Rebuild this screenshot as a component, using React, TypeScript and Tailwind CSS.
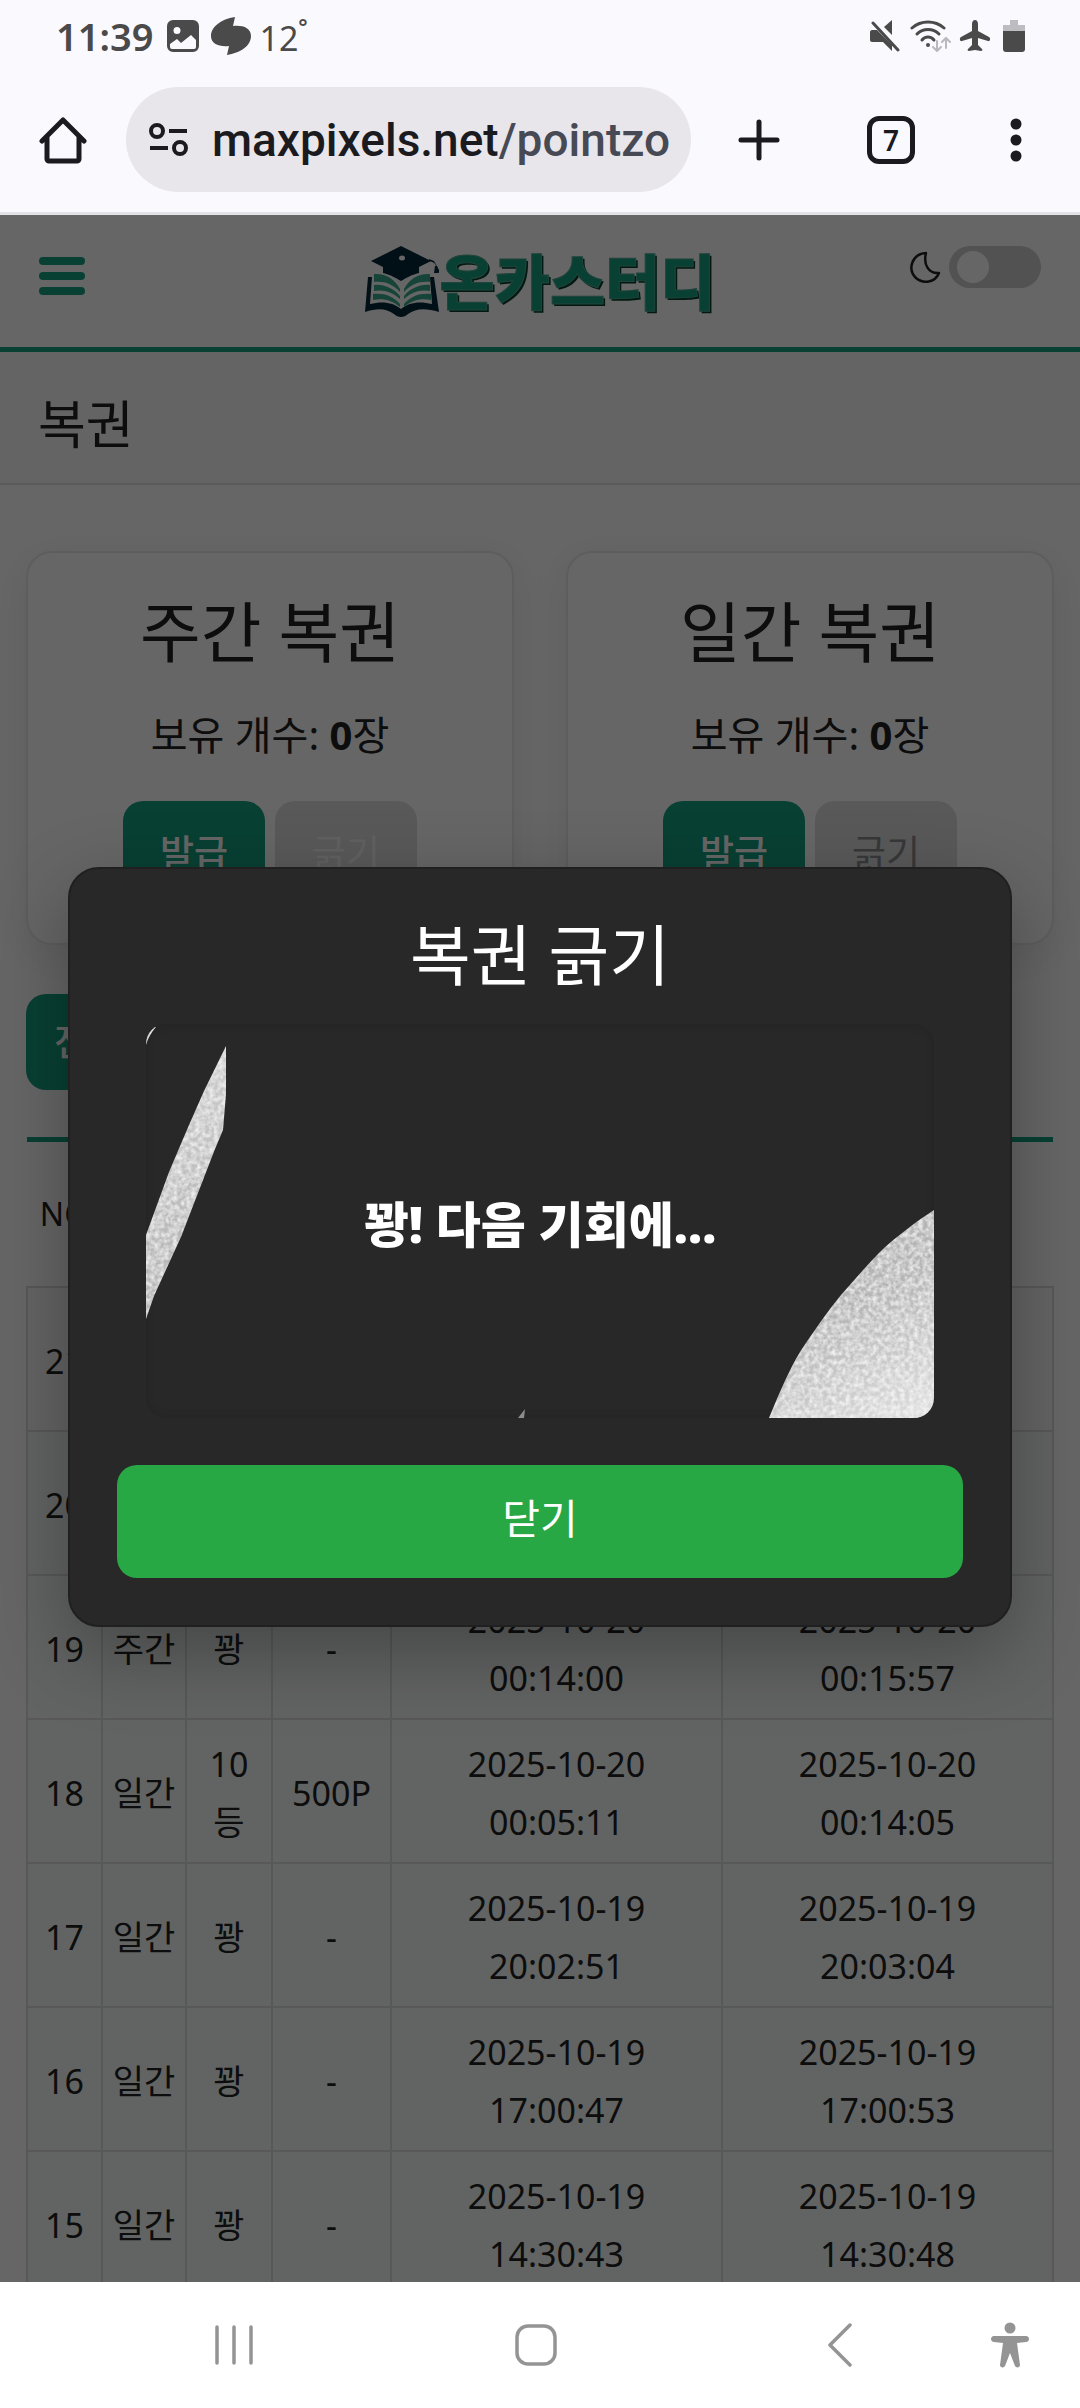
import { useState } from "react";

interface LotteryLog {
  no: number;
  type: string;
  result: string;
  reward: string;
  issuedAt: [string, string];
  openedAt: [string, string];
}

const logs: LotteryLog[] = [
  { no: 21, type: "일간", result: "꽝", reward: "-", issuedAt: ["2025-10-20", "00:15:40"], openedAt: ["2025-10-20", "00:16:02"] },
  { no: 20, type: "일간", result: "꽝", reward: "-", issuedAt: ["2025-10-20", "00:14:20"], openedAt: ["2025-10-20", "00:15:59"] },
  { no: 19, type: "주간", result: "꽝", reward: "-", issuedAt: ["2025-10-20", "00:14:00"], openedAt: ["2025-10-20", "00:15:57"] },
  { no: 18, type: "일간", result: "10등", reward: "500P", issuedAt: ["2025-10-20", "00:05:11"], openedAt: ["2025-10-20", "00:14:05"] },
  { no: 17, type: "일간", result: "꽝", reward: "-", issuedAt: ["2025-10-19", "20:02:51"], openedAt: ["2025-10-19", "20:03:04"] },
  { no: 16, type: "일간", result: "꽝", reward: "-", issuedAt: ["2025-10-19", "17:00:47"], openedAt: ["2025-10-19", "17:00:53"] },
  { no: 15, type: "일간", result: "꽝", reward: "-", issuedAt: ["2025-10-19", "14:30:43"], openedAt: ["2025-10-19", "14:30:48"] },
];

function StatusBar() {
  return (
    <div className="flex h-18 items-center justify-between pr-[55px] pl-[56px] text-[#4a4a4a]">
      <div className="flex items-center">
        <span className="text-[38px] leading-none font-semibold">11:39</span>
        <svg className="ml-[14px] h-8 w-8" viewBox="0 0 32 32">
          <path fill="currentColor" fillRule="evenodd" d="M6 0h20a6 6 0 0 1 6 6v20a6 6 0 0 1-6 6H6a6 6 0 0 1-6-6V6a6 6 0 0 1 6-6zM10 7a3.5 3.5 0 1 0 0 7 3.5 3.5 0 0 0 0-7zM3 24v3a2 2 0 0 0 2 2h22a2 2 0 0 0 2-2v-7l-5-5-10 8-4-4z" />
        </svg>
        <svg className="ml-3 h-[38px] w-10" viewBox="0 0 40 38">
          <path fill="currentColor" d="M24 0C10 2 0 10 0 19c0 8 8 11 18 10l-2 9c13-2 24-9 24-19 0-8-8-11-18-10z" />
        </svg>
        <span className="ml-2 pt-1 text-[34px] leading-none">12</span>
        <span className="-mt-5 text-[22px] leading-none font-semibold">°</span>
      </div>
      <div className="flex items-center gap-2">
        <svg className="h-8 w-8" viewBox="0 0 32 32" fill="currentColor">
          <path d="M22 0v15l-8-8z" />
          <path d="M2 10h5l15 15v6l-9-9H2c-1 0-2-1-2-2v-8c0-1 1-2 2-2z" />
          <path stroke="currentColor" strokeWidth="3" strokeLinecap="round" d="M3 3l25 27" />
        </svg>
        <svg className="h-8 w-[41px]" viewBox="0 0 41 32" fill="none" strokeLinecap="round">
          <g stroke="currentColor" strokeWidth="3">
            <path d="M2 8c9-8 23-8 32 0" />
            <path d="M7 14c6-6 16-6 22 0" />
            <path d="M12 20c3-4 9-4 12 0" />
          </g>
          <circle cx="18" cy="25" r="2" fill="currentColor" />
          <path stroke="#b9b9bd" strokeWidth="2" d="M27 21v10m-4-4 4 4 4-4M36 28V18m-4 4 4-4 4 4" />
        </svg>
        <svg className="h-8 w-8" viewBox="0 0 32 32" fill="currentColor">
          <path d="M16 0c2 0 3 2 3 4v7l11 6c2 1 1 5-1 4l-10-3v7l4 4c1 1 0 2-1 2l-6-1-6 1c-1 0-2-1-1-2l4-4v-7L3 21c-2 1-3-3-1-4l11-6V4c0-2 1-4 3-4z" />
        </svg>
        <svg className="ml-1 h-8 w-[22px]" viewBox="0 0 22 32">
          <path fill="#bdbdc1" d="M7 0h8v5h7v8H0V5h7z" />
          <path fill="currentColor" d="M0 11h22v18a3 3 0 0 1-3 3H3a3 3 0 0 1-3-3z" />
        </svg>
      </div>
    </div>
  );
}

function BrowserBar() {
  return (
    <div className="flex items-center border-b-[3px] border-[#e3e2e9] pt-[15px] pb-5 text-[#1b1b1f]">
      <button aria-label="홈" className="ml-[39px]">
        <svg className="h-12 w-12" viewBox="0 0 48 48" fill="none" stroke="currentColor" strokeWidth="5" strokeLinejoin="round" strokeLinecap="round">
          <path d="M3 25 24 4l21 21M8 21v22a2 2 0 0 0 2 2h28a2 2 0 0 0 2-2V21" />
        </svg>
      </button>
      <div className="ml-[39px] flex h-[105px] flex-1 items-center overflow-hidden rounded-full bg-[#e8e6eb] pr-[21px] pl-[23px]">
        <svg className="h-[34px] w-10 shrink-0" viewBox="0 0 40 34" fill="none" stroke="currentColor" strokeWidth="4">
          <circle cx="8" cy="8" r="6" />
          <path d="M20 8h18M1 25h18" />
          <circle cx="31" cy="25" r="6" />
        </svg>
        <div className="ml-[23px] flex-1 overflow-hidden font-[Roboto,sans-serif] text-[46px] leading-[60px] font-medium whitespace-nowrap">
          maxpixels.net<span className="text-[#474a54]">/pointzone</span>
        </div>
      </div>
      <button aria-label="새 탭" className="ml-[47px]">
        <svg className="h-[42px] w-[42px]" viewBox="0 0 42 42" stroke="currentColor" strokeWidth="5" strokeLinecap="round">
          <path d="M21 3v36M3 21h36" />
        </svg>
      </button>
      <button aria-label="탭 7개" className="ml-[87px] flex h-12 w-12 items-center justify-center rounded-xl border-[5px] border-current text-[28px] leading-none font-semibold">
        7
      </button>
      <button aria-label="메뉴" className="mr-[58px] ml-[95px]">
        <svg className="h-[44px] w-3" viewBox="0 0 12 44" fill="currentColor">
          <circle cx="6" cy="6" r="5.5" />
          <circle cx="6" cy="22" r="5.5" />
          <circle cx="6" cy="38" r="5.5" />
        </svg>
      </button>
    </div>
  );
}

function LogoMark() {
  return (
    <svg className="h-[72px] w-[75px]" viewBox="0 0 75 72">
      <g fill="#03283a">
        <path d="M36 0 6 15l12 6v6c8 2 13 5 18 8 5-3 10-6 18-8v-6l12-6z" />
        <path d="M64 15c6 1 8 4 8 11h2v-2l-5-9-5-2z" />
        <path d="M70 20h2l2 7h-5z" />
        <path d="M3 31h4L5 58c12-3 23-2 31 5 8-7 19-8 31-5l-2-27h4l5 35c-13-4-23-4-31 2-4 4-10 4-14 0-8-6-17-6-29-2z" />
      </g>
      <ellipse cx="37" cy="12" rx="3" ry="2.5" fill="#fff" />
      <g fill="#3aaa8c">
        <path d="M9 28c11-1 20 4 26 15v3C28 38 19 35 9 36zM65 28c-11-1-20 4-26 15v3c7-8 16-11 26-10z" />
        <path d="M9 39c10-1 19 3 26 11v3C28 46 18 43 9 45zM65 39c-10-1-19 3-26 11v3c7-7 17-10 26-8z" />
        <path d="M8 48c11-1 20 2 27 10v3C27 54 18 52 8 54zM66 48c-11-1-20 2-27 10v3c8-7 17-9 27-7z" />
      </g>
    </svg>
  );
}

function SiteHeader() {
  const [dark, setDark] = useState(false);

  return (
    <header className="flex h-[137px] items-start justify-between border-b-[5px] border-[#16a07f] px-[39px]">
      <button aria-label="메뉴 열기" className="mt-[42px] flex w-[132px] flex-col gap-[7px]">
        <span className="h-2 w-[46px] rounded-sm bg-[#16a07f]" />
        <span className="h-2 w-[46px] rounded-sm bg-[#16a07f]" />
        <span className="h-2 w-[46px] rounded-sm bg-[#16a07f]" />
      </button>
      <a href="#" className="mt-[31px] flex items-center">
        <LogoMark />
        <span className="text-[60px] leading-[72px] font-black text-[#16a07f] [-webkit-text-stroke:1px_#55a893] [text-shadow:2px_2px_0_#06402c]">온카스터디</span>
      </a>
      <label className="mt-[31px] flex items-center gap-2">
        <svg className="h-8 w-8" viewBox="0 0 32 32" fill="none" stroke="#222" strokeWidth="2.5" strokeLinejoin="round">
          <path d="M17 2C14 14 20 23 30 22 26 32 14 33 7 27-2 18 3 3 17 2z" />
        </svg>
        <input type="checkbox" aria-label="다크 모드" className="peer sr-only" checked={dark} onChange={(e) => setDark(e.target.checked)} />
        <span className="flex h-[42px] w-[92px] items-center rounded-full bg-[#ccc] px-2 peer-checked:justify-end">
          <span className="h-8 w-8 rounded-full bg-white" />
        </span>
      </label>
    </header>
  );
}

function LotteryCard({ title, count, disabled }: { title: string; count: number; disabled?: boolean }) {
  return (
    <section className="flex h-[394px] flex-1 flex-col items-center rounded-[26px] border-2 border-[#e9e9e9] bg-white pt-[38px] shadow-[0_10px_40px_rgba(0,0,0,0.08)]">
      <h2 className="text-[66px] leading-[80px]">{title}</h2>
      <p className="mt-[34px] text-[40px] leading-[60px]">
        보유 개수: <b>{count}</b>장
      </p>
      <div className="mt-9 flex gap-[10px] text-[37px]">
        <button className="h-24 w-[142px] rounded-[20px] bg-[#16a07f] pt-2 font-medium text-white">발급</button>
        <button className={disabled ? "h-24 w-[142px] rounded-[20px] bg-[#dedede] pt-2 text-[#f2f2f2]" : "h-24 w-[142px] rounded-[20px] bg-[#dedede] pt-2 text-[#8a8c90]"}>
          긁기
        </button>
      </div>
    </section>
  );
}

function LogTable() {
  return (
    <table className="mt-[47px] w-full table-fixed border-collapse border-t-[5px] border-[#16a07f] text-center text-[34px] leading-[58px]">
      <colgroup>
        <col className="w-[75px]" />
        <col className="w-[84px]" />
        <col className="w-[86px]" />
        <col className="w-[119px]" />
        <col />
        <col />
      </colgroup>
      <thead>
        <tr className="h-[147px] text-[32px]">
          <th className="font-normal">NO</th>
          <th className="font-normal">종류</th>
          <th className="font-normal">결과</th>
          <th className="font-normal">보상</th>
          <th className="font-normal">발급일</th>
          <th className="font-normal">사용일</th>
        </tr>
      </thead>
      <tbody>
        {logs.map((log) => (
          <tr key={log.no} className="h-[144px] bg-[#f5faf8] first:bg-[#fafafa] [&>td]:border-2 [&>td]:border-[#dbdbdb] [&>td]:pt-1">
            <td>{log.no}</td>
            <td>{log.type}</td>
            <td className="px-2 break-words">{log.result}</td>
            <td>{log.reward}</td>
            <td>{log.issuedAt[0]}<br />{log.issuedAt[1]}</td>
            <td>{log.openedAt[0]}<br />{log.openedAt[1]}</td>
          </tr>
        ))}
      </tbody>
    </table>
  );
}

// Grey scratch coating that is left on the ticket
function ScratchLayer() {
  return (
    <svg className="absolute inset-0 h-full w-full" viewBox="0 0 788 394" preserveAspectRatio="none">
      <defs>
        <linearGradient id="foil" x1="0" y1="0" x2="1" y2="1">
          <stop offset="0" stopColor="#d4d4d4" />
          <stop offset="0.3" stopColor="#b8b8b8" />
          <stop offset="0.8" stopColor="#b4b4b4" />
          <stop offset="1" stopColor="#e0e0e0" />
        </linearGradient>
        <filter id="grain" x="0" y="0" width="100%" height="100%">
          <feTurbulence type="fractalNoise" baseFrequency="0.22" numOctaves="2" seed="4" />
          <feColorMatrix values="0 0 0 0 1  0 0 0 0 1  0 0 0 0 1  1.4 0 0 0 -0.45" />
          <feComposite in2="SourceGraphic" operator="in" result="noise" />
          <feMerge>
            <feMergeNode in="SourceGraphic" />
            <feMergeNode in="noise" />
          </feMerge>
        </filter>
        <clipPath id="scratch">
          <path d="M0 211 23 148 43 101 58 67 80 22 80 70 77 106 69 125 35 213 8 272 0 295z" />
          <path d="M788 186C765 201 752 212 738 224 722 240 709 255 695 271 682 287 667 308 654 328 643 346 633 370 623 394H788z" />
          <path d="M0 21C2 14 5 9 10 3L0 0z" />
        </clipPath>
      </defs>
      <g clipPath="url(#scratch)">
        <rect width="788" height="394" fill="url(#foil)" filter="url(#grain)" />
      </g>
      <path d="M372 394l7-9-1 9z" fill="#8c8c8c" />
    </svg>
  );
}

function ScratchModal({ onClose }: { onClose: () => void }) {
  return (
    <div className="absolute inset-0 flex items-center justify-center bg-black/60 px-[68px] pb-1">
      <div role="dialog" aria-labelledby="scratch-title" className="flex w-full flex-col items-center rounded-[31px] border-2 border-[#202020] bg-[#282828] p-[47px] text-white shadow-[0_26px_79px_rgba(0,0,0,0.3)]">
        <h3 id="scratch-title" className="text-[66px] leading-[76px]">복권 긁기</h3>
        <div className="relative mt-8 flex h-[394px] w-[788px] max-w-full items-center justify-center overflow-hidden rounded-[20px] shadow-[inset_0_0_10px_rgba(0,0,0,0.15)]">
          <p className="pt-2 text-[49px] font-black">꽝! 다음 기회에...</p>
          <ScratchLayer />
        </div>
        <button onClick={onClose} className="mt-[47px] h-[113px] w-full rounded-[20px] bg-[#28a745] pb-1 text-[41px]">
          닫기
        </button>
      </div>
    </div>
  );
}

function NavBar() {
  return (
    <nav className="flex h-[126px] shrink-0 items-center bg-white text-[#949494]">
      <button aria-label="최근 앱" className="ml-[214px]">
        <svg className="h-[42px] w-10" viewBox="0 0 40 42" stroke="currentColor" strokeWidth="3.5" strokeLinecap="round">
          <path d="M3 3v36M20 3v36M37 3v36" />
        </svg>
      </button>
      <button aria-label="홈 화면" className="ml-[260px]">
        <svg className="h-[42px] w-[44px]" viewBox="0 0 44 42" fill="none" stroke="currentColor" strokeWidth="3.5">
          <rect x="3" y="2" width="38" height="38" rx="11" />
        </svg>
      </button>
      <button aria-label="뒤로" className="ml-[269px]">
        <svg className="h-11 w-[26px]" viewBox="0 0 26 44" fill="none" stroke="currentColor" strokeWidth="3.5" strokeLinecap="round" strokeLinejoin="round">
          <path d="M23 2 3 22l20 20" />
        </svg>
      </button>
      <button aria-label="접근성" className="mr-[51px] ml-auto">
        <svg className="h-[46px] w-[38px]" viewBox="0 0 38 46" fill="currentColor">
          <circle cx="19" cy="6" r="5.5" />
          <path d="M3 14h32c4 0 4 6 0 6l-9 1 3 22c0 3-4 3-5 1l-5-13-5 13c-1 2-5 2-5-1l3-22-9-1c-4 0-4-6 0-6z" />
        </svg>
      </button>
    </nav>
  );
}

export default function App() {
  const [open, setOpen] = useState(true);

  return (
    <div className="flex h-screen flex-col overflow-hidden bg-[#faf9fe] font-['Noto_Sans','Noto_Sans_CJK_KR',sans-serif]">
      <StatusBar />
      <BrowserBar />
      <div className="relative flex-1 overflow-hidden bg-white text-[#222]">
        <SiteHeader />
        <div className="h-[133px] border-b-2 border-[#e0e2e4] bg-[#fafafa] px-[38px] pt-9">
          <h1 className="text-[52px] leading-[72px]">복권</h1>
        </div>
        <main className="px-[26px] pt-[66px]">
          <div className="flex gap-[52px]">
            <LotteryCard title="주간 복권" count={0} disabled />
            <LotteryCard title="일간 복권" count={0} />
          </div>
          <button className="mt-[49px] h-24 rounded-[20px] bg-[#16a07f] px-7 text-[37px] font-medium text-white">전체 긁기</button>
          <LogTable />
        </main>
        {open && <ScratchModal onClose={() => setOpen(false)} />}
      </div>
      <NavBar />
    </div>
  );
}
